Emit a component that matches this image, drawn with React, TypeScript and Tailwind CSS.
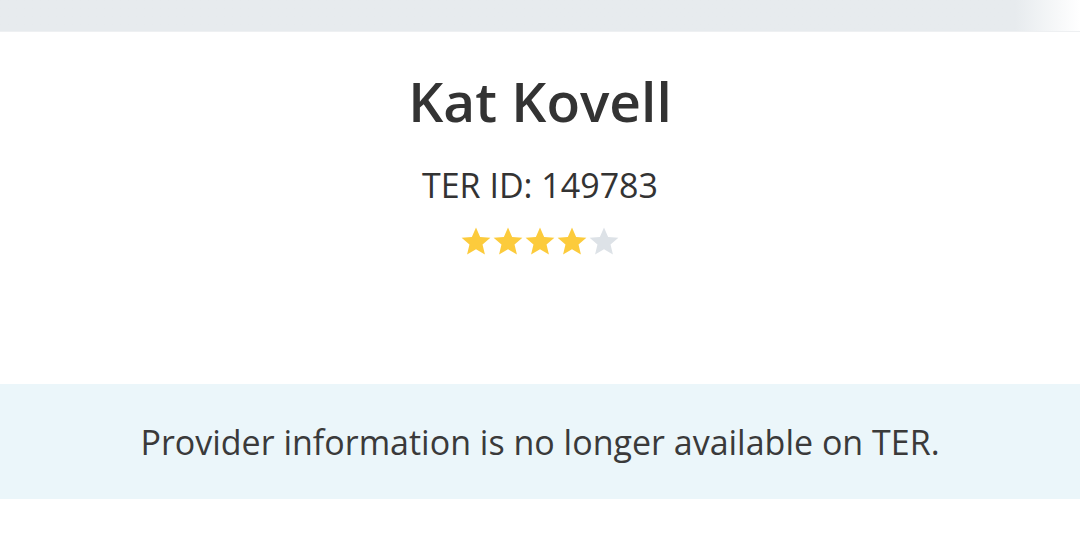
import type React from "react";

const Star: React.FC<{ filled: boolean }> = ({ filled }) => (
  <svg viewBox="0 0 24 24" className="w-[32px] h-[32px]">
    <path
      d="M12 1.8l3.1 7.2 7.7.6-5.9 5 1.8 7.6L12 18.1l-6.7 4.1 1.8-7.6-5.9-5 7.7-.6z"
      fill={filled ? "#fccb3c" : "#dde2e7"}
    />
  </svg>
);

const App: React.FC = () => {
  return (
    <div
      className="w-[1080px] h-[543px] bg-white text-[#333333] overflow-hidden"
      style={{ fontFamily: '"Open Sans", "Liberation Sans", sans-serif' }}
    >
      {/* top bar */}
      <div className="h-[32px] bg-gradient-to-r from-[#e7ebee] from-[94%] to-white border-b border-[#eef0f2]" />

      {/* header */}
      <div className="flex flex-col items-center pt-[37px]">
        <h1 className="text-[55px] leading-[64px] font-semibold">Kat Kovell</h1>
        <p className="mt-[32px] text-[34px] leading-[40px]">TER ID: 149783</p>
        <div className="flex mt-[20px]">
          {[1, 2, 3, 4, 5].map((n) => (
            <Star key={n} filled={n <= 4} />
          ))}
        </div>
      </div>

      {/* notice */}
      <div className="mt-[127px] h-[115px] bg-[#ebf6fa] flex items-center justify-center">
        <p className="text-[34px] leading-[40px] text-[#3a3a3a]">
          Provider information is no longer available on TER.
        </p>
      </div>
    </div>
  );
};

export default App;
